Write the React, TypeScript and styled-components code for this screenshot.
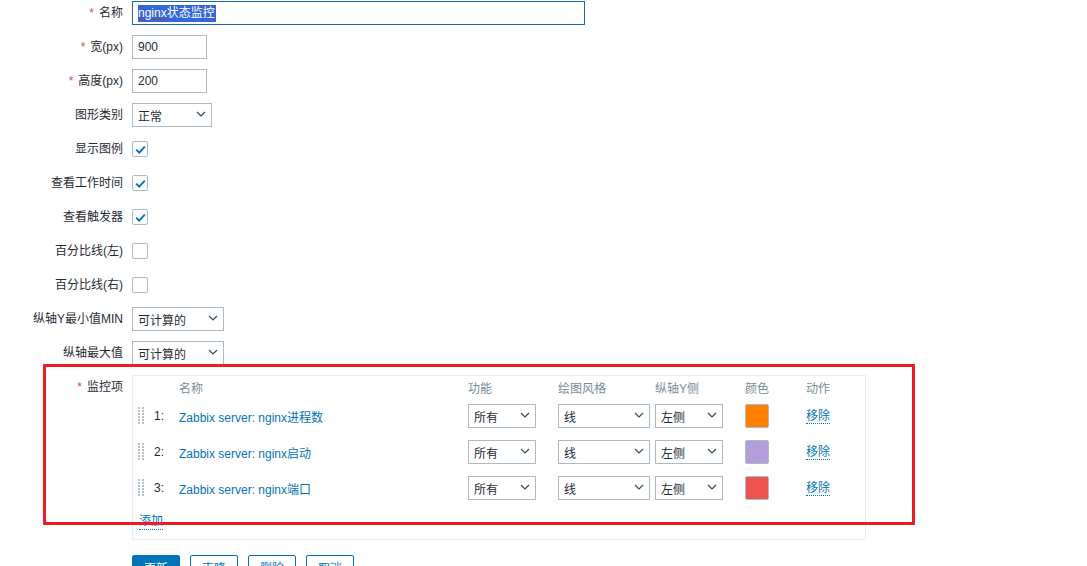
import React from "react";
import styled, { createGlobalStyle } from "styled-components";

const GlobalStyle = createGlobalStyle`
  html, body {
    margin: 0;
    padding: 0;
    background: #fff;
    overflow: hidden;
  }
  body {
    font-family: "Liberation Sans", "Noto Sans CJK SC", Arial, sans-serif;
    font-size: 12px;
    color: #1f2c33;
  }
`;

const c = {
  text: "#1f2c33",
  border: "#acbbc2",
  link: "#0275b8",
  head: "#768d99",
  box: "#ebeef0",
  req: "#d64e4e",
};

/* ── layout ── */
const Page = styled.div`
  position: relative;
  width: 1087px;
  height: 566px;
`;

const Form = styled.div`
  display: grid;
  grid-template-columns: 123px 1fr;
  column-gap: 9px;
  row-gap: 10px;
  padding-top: 1px;
`;

const Label = styled.div`
  align-self: start;
  text-align: right;
  line-height: 24px;
  white-space: nowrap;
`;

const Star = styled.span`
  color: ${c.req};
  margin-right: 5px;
`;

const Field = styled.div`
  display: flex;
  align-items: center;
  min-height: 24px;
`;

/* ── controls ── */
const TextInput = styled.div<{ $w: number; $focus?: boolean }>`
  box-sizing: border-box;
  width: ${({ $w }) => $w}px;
  height: 24px;
  border: 1px solid ${({ $focus }) => ($focus ? "#1a6aa5" : c.border)};
  padding: 0 5px;
  display: flex;
  align-items: center;
  background: #fff;
  color: ${c.text};
`;

const Selected = styled.span`
  background: #3367d6;
  color: #fff;
  line-height: 17px;
  padding: 0 1px 0 0;
`;

const Misspelt = styled.span`
  text-decoration: underline dotted #e02020;
  text-underline-offset: 2px;
`;

const SelectBox = styled.div<{ $w: number }>`
  box-sizing: border-box;
  width: ${({ $w }) => $w}px;
  height: 24px;
  border: 1px solid ${c.border};
  padding: 1px 5px 0 5px;
  display: flex;
  align-items: center;
  justify-content: space-between;
  background: #fff;
  color: ${c.text};
`;

const Chevron = () => (
  <svg width="10" height="6" viewBox="0 0 10 6" style={{ marginTop: -3 }}>
    <path d="M1 1l4 4 4-4" fill="none" stroke="#3a4a52" strokeWidth="1.2" />
  </svg>
);

const Select = ({ w, value }: { w: number; value: string }) => (
  <SelectBox $w={w}>
    <span>{value}</span>
    <Chevron />
  </SelectBox>
);

const CheckBox = styled.div`
  box-sizing: border-box;
  width: 16px;
  height: 16px;
  border: 1px solid ${c.border};
  border-radius: 2px;
  background: #fff;
  display: flex;
  align-items: center;
  justify-content: center;
`;

const Check = ({ on }: { on?: boolean }) => (
  <CheckBox>
    {on && (
      <svg width="11" height="9" viewBox="0 0 11 9">
        <path d="M1.2 4.6l3 3 5.6-6" fill="none" stroke={c.link} strokeWidth="2" />
      </svg>
    )}
  </CheckBox>
);

/* ── items table ── */
const ItemsBox = styled.div`
  box-sizing: border-box;
  width: 734px;
  border: 1px solid ${c.box};
  padding: 0 5px 5px;
`;

const RowGrid = styled.div<{ $h: number; $head?: boolean }>`
  display: grid;
  grid-template-columns: 16px 25px 289px 90px 97px 90px 61px 1fr;
  align-items: center;
  height: ${({ $h }) => $h}px;
  color: ${({ $head }) => ($head ? c.head : c.text)};
`;

const Handle = () => (
  <svg width="7" height="18" viewBox="0 0 7 18">
    {[0, 3, 6, 9, 12, 15].map((y) =>
      [0, 4].map((x) => <rect key={`${x}-${y}`} x={x} y={y} width="2" height="2" fill="#b5c1c7" />)
    )}
  </svg>
);

const ItemLink = styled.span`
  color: ${c.link};
`;

const DottedLink = styled.span`
  color: ${c.link};
  border-bottom: 1px dotted ${c.link};
  line-height: 15px;
`;

const Swatch = styled.div<{ $color: string }>`
  box-sizing: border-box;
  width: 24px;
  height: 24px;
  border: 1px solid ${c.border};
  border-radius: 2px;
  background: ${({ $color }) => $color};
`;

const AddRow = styled.div`
  box-sizing: border-box;
  height: 28px;
  display: flex;
  align-items: center;
  padding: 4px 0 0 1px;
`;

/* ── buttons ── */
const Buttons = styled.div`
  display: flex;
  gap: 10px;
  margin-top: 5px;
`;

const Button = styled.div<{ $primary?: boolean }>`
  box-sizing: border-box;
  width: 48px;
  height: 24px;
  border: 1px solid ${c.link};
  border-radius: 2px;
  background: ${({ $primary }) => ($primary ? c.link : "#fff")};
  color: ${({ $primary }) => ($primary ? "#fff" : c.link)};
  display: flex;
  align-items: center;
  justify-content: center;
`;

/* annotation drawn on top of the screenshot */
const Highlight = styled.div`
  position: absolute;
  left: 43px;
  top: 364px;
  width: 872px;
  height: 161px;
  box-sizing: border-box;
  border: 3px solid #ec1c24;
  border-radius: 1px;
  pointer-events: none;
`;

const items = [
  { n: 1, name: "Zabbix server: nginx进程数", color: "#ff8000" },
  { n: 2, name: "Zabbix server: nginx启动", color: "#b39ddb" },
  { n: 3, name: "Zabbix server: nginx端口", color: "#ef5350" },
];

export default function App() {
  return (
    <Page>
      <GlobalStyle />
      <Form>
        <Label><Star>*</Star>名称</Label>
        <Field>
          <TextInput $w={453} $focus>
            <Selected><Misspelt>nginx</Misspelt>状态监控</Selected>
          </TextInput>
        </Field>

        <Label><Star>*</Star>宽(px)</Label>
        <Field><TextInput $w={75}>900</TextInput></Field>

        <Label><Star>*</Star>高度(px)</Label>
        <Field><TextInput $w={75}>200</TextInput></Field>

        <Label>图形类别</Label>
        <Field><Select w={80} value="正常" /></Field>

        <Label>显示图例</Label>
        <Field><Check on /></Field>

        <Label>查看工作时间</Label>
        <Field><Check on /></Field>

        <Label>查看触发器</Label>
        <Field><Check on /></Field>

        <Label>百分比线(左)</Label>
        <Field><Check /></Field>

        <Label>百分比线(右)</Label>
        <Field><Check /></Field>

        <Label>纵轴Y最小值MIN</Label>
        <Field><Select w={92} value="可计算的" /></Field>

        <Label>纵轴最大值</Label>
        <Field><Select w={92} value="可计算的" /></Field>

        <Label><Star>*</Star>监控项</Label>
        <ItemsBox>
          <RowGrid $h={22} $head>
            <span />
            <span />
            <span>名称</span>
            <span>功能</span>
            <span>绘图风格</span>
            <span>纵轴Y侧</span>
            <span>颜色</span>
            <span>动作</span>
          </RowGrid>
          {items.map((it) => (
            <RowGrid key={it.n} $h={36}>
              <Handle />
              <span>{it.n}:</span>
              <ItemLink>{it.name}</ItemLink>
              <Select w={68} value="所有" />
              <Select w={92} value="线" />
              <Select w={68} value="左侧" />
              <Swatch $color={it.color} />
              <span><DottedLink>移除</DottedLink></span>
            </RowGrid>
          ))}
          <AddRow><DottedLink>添加</DottedLink></AddRow>
        </ItemsBox>

        <span />
        <Buttons>
          <Button $primary>更新</Button>
          <Button>克隆</Button>
          <Button>删除</Button>
          <Button>取消</Button>
        </Buttons>
      </Form>
      <Highlight />
    </Page>
  );
}
